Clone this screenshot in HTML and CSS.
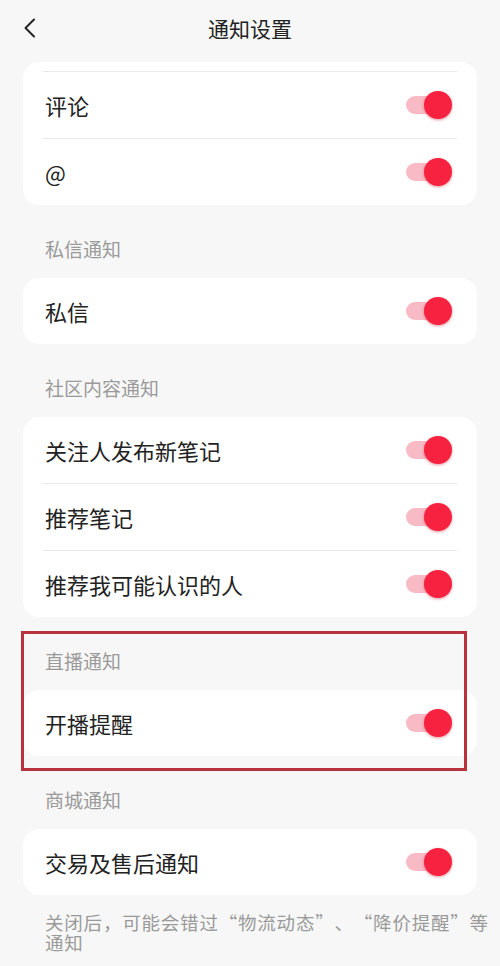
FILE: index.html
```html
<!DOCTYPE html>
<html lang="zh-CN">
<head>
    <meta charset="UTF-8">
    <meta name="viewport" content="width=device-width, initial-scale=1.0">
    <title>通知设置</title>
    <link rel="stylesheet" href="styles.css">
</head>
<body>
    <div class="header">
        <span class="back">
            <svg width="14" height="20" viewBox="0 0 14 20"><path d="M11 1.5 L2.5 10 L11 18.5" fill="none" stroke="#222" stroke-width="2" stroke-linecap="round" stroke-linejoin="round"/></svg>
        </span>
        <h1>通知设置</h1>
    </div>

    <div class="card">
        <div class="row-clip"></div>
        <div class="row"><span>评论</span><span class="switch on"></span></div>
        <div class="row"><span>@</span><span class="switch on"></span></div>
    </div>

    <div class="section-title">私信通知</div>
    <div class="card">
        <div class="row"><span>私信</span><span class="switch on"></span></div>
    </div>

    <div class="section-title">社区内容通知</div>
    <div class="card">
        <div class="row"><span>关注人发布新笔记</span><span class="switch on"></span></div>
        <div class="row"><span>推荐笔记</span><span class="switch on"></span></div>
        <div class="row"><span>推荐我可能认识的人</span><span class="switch on"></span></div>
    </div>

    <div class="section marked">
        <div class="section-title">直播通知</div>
        <div class="card">
            <div class="row"><span>开播提醒</span><span class="switch on"></span></div>
        </div>
    </div>

    <div class="section-title">商城通知</div>
    <div class="card">
        <div class="row"><span>交易及售后通知</span><span class="switch on"></span></div>
    </div>

    <p class="note">关闭后，可能会错过“物流动态”、“降价提醒”等通知</p>
</body>
</html>
```

FILE: styles.css
```css
body {
    font-family: "Noto Sans CJK SC", "Noto Sans", sans-serif;
    background-color: #f7f7f7;
    margin: 0;
    color: #222;
}
.header {
    position: relative;
    height: 58px;
    display: flex;
    align-items: center;
    justify-content: center;
}
.back {
    position: absolute;
    left: 23px;
    top: 18px;
    display: flex;
}
h1 {
    margin: 0;
    font-size: 21px;
    font-weight: normal;
    color: #222;
    line-height: 58px;
    margin-top: -2px;
}
.card {
    background: white;
    border-radius: 16px;
    margin: 0 23px;
    overflow: hidden;
}
.header + .card {
    margin-top: 4px;
}
.row-clip {
    height: 9px;
}
.row {
    height: 66px;
    margin: 0 20px;
    padding: 0 5px 0 2px;
    display: flex;
    align-items: center;
    justify-content: space-between;
    font-size: 22px;
    border-top: 1px solid #e9e9e9;
}
.card > .row:first-child {
    border-top: none;
}
.section-title {
    padding: 32px 0 17px 45px;
    font-size: 19px;
    line-height: 24px;
    color: #9a9a9a;
}
.switch {
    position: relative;
    width: 46px;
    height: 28px;
}
.switch::before {
    content: "";
    position: absolute;
    left: 0;
    top: 5px;
    width: 40px;
    height: 18px;
    border-radius: 9px;
    background: #f8bac5;
}
.switch::after {
    content: "";
    position: absolute;
    right: 0;
    top: 0;
    width: 28px;
    height: 28px;
    border-radius: 50%;
    background: #f7223f;
    box-shadow: 0 1px 3px rgba(190, 20, 45, 0.45);
}
.section.marked {
    position: relative;
}
.section.marked::after {
    content: "";
    position: absolute;
    left: 21px;
    right: 33px;
    top: 14px;
    bottom: -15px;
    border: 3px solid #b8323e;
    pointer-events: none;
}
.note {
    margin: 0;
    padding: 17px 2px 0 45px;
    font-size: 18.5px;
    line-height: 20px;
    letter-spacing: 0.8px;
    color: #9a9a9a;
    text-spacing-trim: space-all;
}
```
